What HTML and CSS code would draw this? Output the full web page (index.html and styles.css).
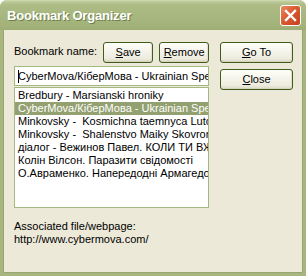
FILE: index.html
```html
<!DOCTYPE html>
<html lang="en">
<head>
    <meta charset="UTF-8">
    <title>Bookmark Organizer</title>
    <link rel="stylesheet" href="styles.css">
</head>
<body>
    <div class="window">
        <div class="titlebar">
            <span class="title">Bookmark Organizer</span>
            <div class="close-x">
                <svg width="13" height="13" viewBox="0 0 13 13">
                    <path d="M2 2 L11 11 M11 2 L2 11" stroke="#fff" stroke-width="2.4" stroke-linecap="square"/>
                </svg>
            </div>
        </div>

        <div class="client">
            <div class="main">
                <div class="left">
                    <div class="name-row">
                        <span class="label">Bookmark name:</span>
                        <button class="btn small"><u>S</u>ave</button>
                        <button class="btn small"><u>R</u>emove</button>
                    </div>
                    <div class="textbox"><span class="caret"></span>CyberMova/КіберМова - Ukrainian Speech</div>
                    <div class="listbox">
                        <div class="item">Bredbury - Marsianski hroniky</div>
                        <div class="item selected">CyberMova/КіберМова - Ukrainian Speech</div>
                        <div class="item">Minkovsky -&nbsp; Kosmichna taemnyca Lutovskogo</div>
                        <div class="item">Minkovsky -&nbsp; Shalenstvo Maiky Skovronek</div>
                        <div class="item">діалог - Вежинов Павел. КОЛИ ТИ ВЖЕ</div>
                        <div class="item">Колін Вілсон. Паразити свідомості</div>
                        <div class="item">О.Авраменко. Напередодні Армагедону</div>
                    </div>
                </div>
                <div class="right">
                    <button class="btn wide"><u>G</u>o To</button>
                    <button class="btn wide"><u>C</u>lose</button>
                </div>
            </div>

            <div class="assoc">
                Associated file/webpage:<br>
                http://www.cybermova.com/
            </div>
        </div>
    </div>
</body>
</html>
```

FILE: styles.css
```css
body {
    margin: 0;
    background: #ffffff;
    font-family: 'Liberation Sans', Arial, sans-serif;
    font-size: 11px;
    line-height: 13px;
    color: #000;
}

.window {
    width: 306px;
    height: 276px;
    display: flex;
    flex-direction: column;
    background: #a7b67e;
    border-radius: 7px 7px 0 0;
    box-sizing: border-box;
}

/* title bar */
.titlebar {
    height: 30px;
    flex: none;
    display: flex;
    align-items: center;
    justify-content: space-between;
    padding: 0 5px 0 7px;
    border-radius: 7px 7px 0 0;
    background: linear-gradient(#d3ddb4 0, #b9c796 2px, #adbc85 5px, #a8b880 14px, #a2b279 26px, #9dad73 30px);
}

.title {
    font-family: 'Liberation Sans', Arial, sans-serif;
    font-weight: bold;
    font-size: 13px;
    letter-spacing: -0.2px;
    color: #fff;
    text-shadow: 1px 1px 0 #6f7f4a;
    margin-top: 1px;
}

.close-x {
    width: 21px;
    height: 21px;
    box-sizing: border-box;
    border: 1px solid #fff;
    border-radius: 3px;
    background: linear-gradient(135deg, #e98a62 0%, #d95a30 45%, #c4411c 100%);
    display: flex;
    align-items: center;
    justify-content: center;
    margin-top: 1px;
}

/* client area */
.client {
    flex: 1;
    margin: 0 4px 4px 4px;
    background: #ece9d8;
    padding: 12px 0 0 10px;
    box-shadow: -1px 0 0 #96a66c, 1px 0 0 #96a66c, 0 1px 0 #96a66c;
}

.main {
    display: flex;
    gap: 11px;
}

.left {
    width: 195px;
    display: flex;
    flex-direction: column;
}

.name-row {
    display: flex;
    height: 21px;
    gap: 6px;
}

.label {
    flex: 1;
    padding-top: 3px;
    white-space: nowrap;
}

.btn {
    font-family: 'Liberation Sans', Arial, sans-serif;
    font-size: 11px;
    line-height: 13px;
    color: #000;
    height: 21px;
    padding: 0;
    border: 1px solid #3f5d1d;
    border-radius: 3px;
    background: linear-gradient(#fefef9 0, #f6f5ec 40%, #eeecdf 80%, #dcd8c4 100%);
    box-shadow: inset 0 -1px 0 #d8d2bb, inset -1px 0 0 #e4e0cc;
}

.btn u {
    text-decoration-thickness: 1px;
    text-underline-offset: 1px;
}

.btn.small {
    width: 50px;
    flex: none;
}

.btn.wide {
    width: 73px;
}

.right {
    display: flex;
    flex-direction: column;
    gap: 6px;
}

.textbox {
    margin-top: 3px;
    height: 20px;
    box-sizing: border-box;
    border: 1px solid #a4b97f;
    background: #fff;
    padding: 3px 0 0 3px;
    white-space: nowrap;
    overflow: hidden;
}

.caret {
    display: inline-block;
    width: 1px;
    height: 13px;
    background: #000;
    vertical-align: top;
    margin-right: -1px;
}

.listbox {
    margin-top: 1px;
    height: 121px;
    box-sizing: border-box;
    border: 1px solid #a4b97f;
    background: #fff;
    padding-top: 1px;
    overflow: hidden;
}

.item {
    height: 13px;
    padding-left: 3px;
    white-space: nowrap;
    overflow: hidden;
}

.item.selected {
    background: #93a070;
    color: #fff;
}

.assoc {
    margin-top: 12px;
}
```
